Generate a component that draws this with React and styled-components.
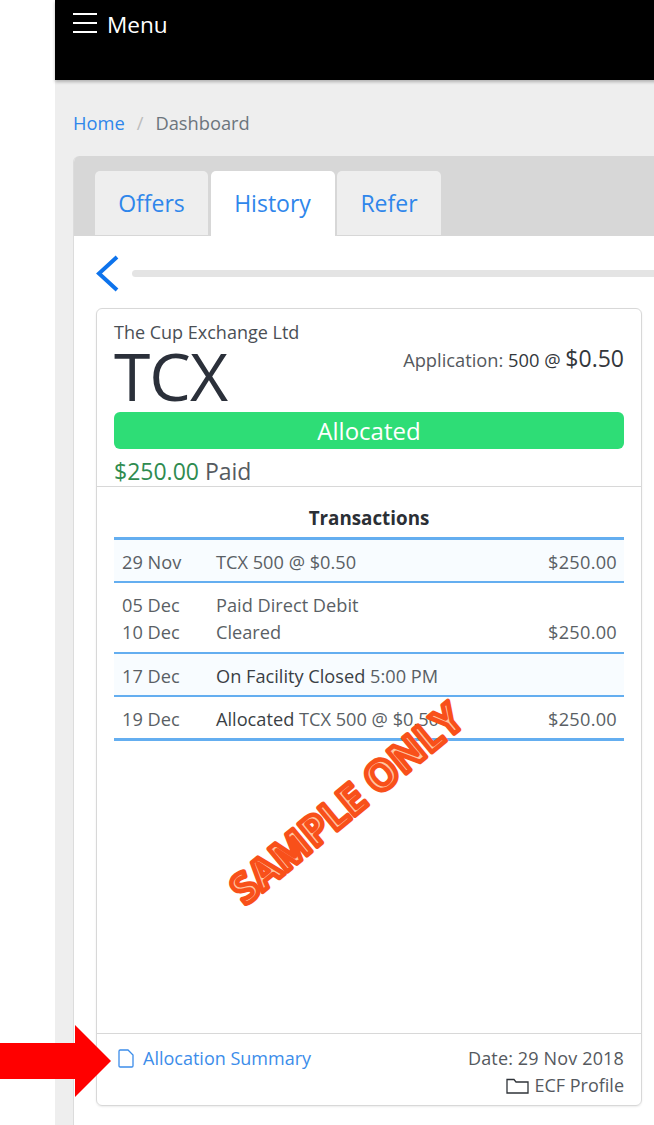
import React from "react";
import styled, { createGlobalStyle } from "styled-components";

const GlobalStyle = createGlobalStyle`
  html, body {
    margin: 0;
    padding: 0;
    background: #fff;
    overflow: hidden;
  }
  body {
    font-family: "Open Sans", "Liberation Sans", sans-serif;
    color: #3a3f45;
  }
`;

const Page = styled.div`
  position: relative;
  width: 654px;
  height: 1125px;
  overflow: hidden;
  padding-left: 55px;
  box-sizing: border-box;
`;

const Main = styled.main`
  width: 800px;
  height: 1125px;
  background: #eeeeee;
`;

const Header = styled.header`
  height: 80px;
  background: #000;
  box-shadow: 0 2px 3px rgba(0, 0, 0, 0.25);
  padding: 10px 18px 0;
  box-sizing: border-box;
  display: flex;
  align-items: flex-start;
  gap: 9px;
  color: #fff;
  font-size: 22.6px;
  line-height: 30px;
`;

const Breadcrumb = styled.nav`
  display: flex;
  align-items: flex-start;
  padding: 29px 18px 0;
  height: 76px;
  box-sizing: border-box;
  font-size: 18.3px;
  line-height: 28px;
  color: #6c757d;
  > a {
    color: #2f86eb;
    text-decoration: none;
  }
  > span.sep {
    margin: 0 12px;
    color: #bcbcbc;
  }
`;

const Panel = styled.section`
  margin-left: 18px;
  border-radius: 6px 0 0 0;
  overflow: hidden;
  background: #fff;
  height: 969px;
  border-left: 1px solid #dcdcdc;
  box-sizing: border-box;
`;

const TabBar = styled.div`
  height: 80px;
  background: #d7d7d7;
  padding: 15px 0 0 21px;
  box-sizing: border-box;
  display: flex;
  gap: 2.5px;
  align-items: flex-end;
`;

const Tab = styled.div`
  width: ${(p) => p.$w}px;
  height: ${(p) => (p.$active ? 65 : 64)}px;
  margin-bottom: ${(p) => (p.$active ? 0 : 1)}px;
  background: ${(p) => (p.$active ? "#fff" : "#eeeeee")};
  border-radius: 5px 5px 0 0;
  display: flex;
  align-items: center;
  justify-content: center;
  padding-bottom: ${(p) => (p.$active ? 2 : 0)}px;
  box-sizing: border-box;
  color: #2f86eb;
  font-size: 23px;
`;

const Progress = styled.div`
  display: flex;
  align-items: center;
  gap: 13px;
  padding: 3px 0 0 21px;
  height: 72px;
  box-sizing: border-box;
`;

const ProgressTrack = styled.div`
  flex: 1;
  height: 7px;
  border-radius: 4px;
  background: #e4e4e4;
`;

const Card = styled.article`
  margin-left: 22px;
  width: 546px;
  height: 798px;
  border: 1px solid #d8d8d8;
  border-radius: 6px;
  box-shadow: 0 1px 2px rgba(0, 0, 0, 0.08);
  box-sizing: border-box;
  display: flex;
  flex-direction: column;
`;

const CardTop = styled.div`
  height: 178px;
  padding: 11px 17px 0;
  box-sizing: border-box;
  border-bottom: 1px solid #d8d8d8;
`;

const Company = styled.div`
  font-size: 18px;
  line-height: 24px;
  color: #4a4f55;
`;

const TitleRow = styled.div`
  display: flex;
  justify-content: space-between;
  align-items: flex-start;
  height: 60px;
`;

const Ticker = styled.div`
  font-size: 66px;
  line-height: 58px;
  margin-top: 2px;
  color: #2b303a;
  letter-spacing: -1px;
`;

const Application = styled.div`
  font-size: 18.3px;
  line-height: 30px;
  margin-top: -1px;
  color: #55595e;
  > b {
    font-weight: 400;
    color: #33373c;
  }
  > b.price {
    font-size: 23px;
  }
`;

const Status = styled.div`
  height: 37px;
  margin-top: 8px;
  border-radius: 6px;
  background: #2edd76;
  color: #fff;
  font-size: 24px;
  line-height: 37px;
  text-align: center;
`;

const Paid = styled.div`
  font-size: 23px;
  line-height: 30px;
  margin-top: 7px;
  color: #555a60;
  > span {
    color: #2f8b50;
  }
`;

const CardBody = styled.div`
  flex: 1;
  padding: 0 17px;
`;

const SectionTitle = styled.h3`
  margin: 0;
  height: 50px;
  font-size: 18.8px;
  font-weight: 700;
  line-height: 62px;
  text-align: center;
  color: #2b2f35;
`;

const Table = styled.div`
  border-top: 3px solid #64aef0;
  border-bottom: 3px solid #64aef0;
`;

const Row = styled.div`
  display: grid;
  grid-template-columns: 94px 1fr auto;
  padding: 3px 7px 0 8px;
  height: ${(p) => p.$h - 3}px;
  align-content: center;
  background: ${(p) => (p.$tint ? "#f8fcff" : "#fff")};
  font-size: 18.2px;
  line-height: 27px;
  color: #5a5f65;
  & + & {
    border-top: 2px solid #64aef0;
  }
  b {
    font-weight: 400;
    color: #3a3f45;
  }
`;

const Amount = styled.div`
  text-align: right;
  letter-spacing: 0.25px;
`;

const CardFooter = styled.footer`
  height: 72px;
  border-top: 1px solid #d8d8d8;
  padding: 11px 17px 0 21px;
  box-sizing: border-box;
  display: flex;
  justify-content: space-between;
  font-size: 18px;
  line-height: 27px;
  color: #55595e;
`;

const DocLink = styled.a`
  display: flex;
  align-items: flex-start;
  gap: 9px;
  height: 27px;
  color: #3c8dea;
  text-decoration: none;
  > svg {
    margin-top: 4px;
  }
`;

const FooterMeta = styled.div`
  text-align: right;
  > div {
    display: flex;
    justify-content: flex-end;
    align-items: center;
    gap: 5px;
  }
  > div:first-child {
    letter-spacing: 0.15px;
  }
`;

const Watermark = styled.svg`
  position: absolute;
  left: 206px;
  top: 683px;
  overflow: visible;
  > text {
    font-family: "Open Sans", "Liberation Sans", sans-serif;
    font-size: 41px;
    font-weight: 700;
    fill: #ffc6a0;
    stroke: #f8501a;
    stroke-width: 4.6px;
    stroke-linejoin: round;
    stroke-linecap: round;
  }
`;

const Arrow = styled.svg`
  position: absolute;
  left: 0;
  top: 1025px;
`;

const rows = [
  { h: 41, tint: true, date: "29 Nov", desc: "TCX 500 @ $0.50", amount: "$250.00" },
  { h: 69, date: ["05 Dec", "10 Dec"], desc: ["Paid Direct Debit", "Cleared"], amount: ["", "$250.00"] },
  { h: 41, tint: true, date: "17 Dec", desc: <><b>On Facility Closed</b> 5:00 PM</>, amount: "" },
  { h: 41, date: "19 Dec", desc: <><b>Allocated</b> TCX 500 @ $0.50</>, amount: "$250.00" },
];

const Lines = ({ value }) =>
  Array.isArray(value) ? value.map((v, i) => <div key={i}>{v || "\u00a0"}</div>) : value;

export default function App() {
  return (
    <Page>
      <GlobalStyle />
      <Main>
        <Header>
          <svg width="25" height="22" viewBox="0 0 25 22" style={{ marginTop: 2 }}>
            <path d="M0 2h24M0 11h24M0 20h24" stroke="#fff" strokeWidth="2" fill="none" />
          </svg>
          <span>Menu</span>
        </Header>
        <Breadcrumb>
          <a href="#">Home</a>
          <span className="sep">/</span>
          <span>Dashboard</span>
        </Breadcrumb>
        <Panel>
          <TabBar>
            <Tab $w={113}>Offers</Tab>
            <Tab $w={124} $active>History</Tab>
            <Tab $w={104}>Refer</Tab>
          </TabBar>
          <Progress>
            <svg width="24" height="37" viewBox="0 0 24 37">
              <path d="M22 2 4 18.5 22 35" stroke="#0d73ec" strokeWidth="4" fill="none" />
            </svg>
            <ProgressTrack />
          </Progress>
          <Card>
            <CardTop>
              <Company>The Cup Exchange Ltd</Company>
              <TitleRow>
                <Ticker>TCX</Ticker>
                <Application>
                  Application: <b>500 @</b> <b className="price">$0.50</b>
                </Application>
              </TitleRow>
              <Status>Allocated</Status>
              <Paid><span>$250.00</span> Paid</Paid>
            </CardTop>
            <CardBody>
              <SectionTitle>Transactions</SectionTitle>
              <Table>
                {rows.map((r, i) => (
                  <Row key={i} $h={r.h} $tint={r.tint}>
                    <div><Lines value={r.date} /></div>
                    <div><Lines value={r.desc} /></div>
                    <Amount><Lines value={r.amount} /></Amount>
                  </Row>
                ))}
              </Table>
            </CardBody>
            <CardFooter>
              <DocLink href="#">
                <svg width="16" height="19" viewBox="0 0 16 19" fill="none" stroke="#3c8dea" strokeWidth="1.3">
                  <path d="M1 2.2C1 1.4 1.5 1 2.2 1H10L15 6V16.8c0 .8-.5 1.2-1.2 1.2H2.2C1.5 18 1 17.6 1 16.8Z" />
                </svg>
                Allocation Summary
              </DocLink>
              <FooterMeta>
                <div>Date: 29 Nov 2018</div>
                <div>
                  <svg width="23" height="16" viewBox="0 0 23 16" fill="none" stroke="#2f3338" strokeWidth="1.3">
                    <path d="M1 14.5V1.5H8L10 4H22V15H1Z" />
                  </svg>
                  ECF Profile
                </div>
              </FooterMeta>
            </CardFooter>
          </Card>
        </Panel>
      </Main>
      <Watermark width="280" height="240" viewBox="0 0 280 240">
        <text x="141" y="135" textAnchor="middle" transform="rotate(-39.5 141 121)">SAMPLE ONLY</text>
      </Watermark>
      <Arrow width="112" height="72" viewBox="0 0 112 72">
        <path d="M0 18H75V0L111 36 75 72V54H0Z" fill="#ff0000" />
      </Arrow>
    </Page>
  );
}
